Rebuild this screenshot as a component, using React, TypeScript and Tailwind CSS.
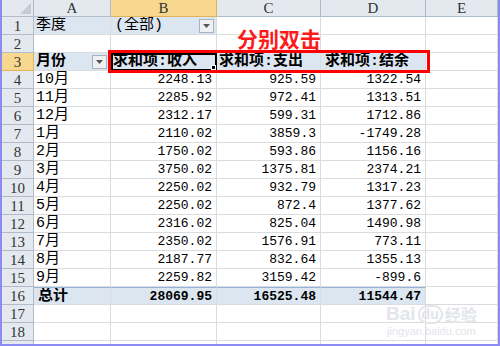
import { useState } from "react";

const rows = [
  { m: "10月", a: "2248.13", b: "925.59", c: "1322.54" },
  { m: "11月", a: "2285.92", b: "972.41", c: "1313.51" },
  { m: "12月", a: "2312.17", b: "599.31", c: "1712.86" },
  { m: "1月", a: "2110.02", b: "3859.3", c: "-1749.28" },
  { m: "2月", a: "1750.02", b: "593.86", c: "1156.16" },
  { m: "3月", a: "3750.02", b: "1375.81", c: "2374.21" },
  { m: "4月", a: "2250.02", b: "932.79", c: "1317.23" },
  { m: "5月", a: "2250.02", b: "872.4", c: "1377.62" },
  { m: "6月", a: "2316.02", b: "825.04", c: "1490.98" },
  { m: "7月", a: "2350.02", b: "1576.91", c: "773.11" },
  { m: "8月", a: "2187.77", b: "832.64", c: "1355.13" },
  { m: "9月", a: "2259.82", b: "3159.42", c: "-899.6" },
];

const cell = "h-[18px] border-r border-b border-[#dadcdd] leading-[18px] overflow-hidden whitespace-nowrap";
const rowHead = "h-[18px] border-r border-b border-[#b1bccb] bg-[#e4e9f0] text-center text-[15px] leading-[18px] text-[#333] font-['Liberation_Serif',serif]";
const colHead = "h-[17px] border-r border-b border-[#b1bccb] bg-[#e4e9f0] text-center text-[15px] leading-[17px] text-[#333] font-['Liberation_Serif',serif]";

const DropBtn = () => (
  <div className="w-[15px] h-[14px] border border-[#a8b2c0] bg-[#eef0f3] flex items-center justify-center">
    <svg width="7" height="4" viewBox="0 0 7 4"><path d="M0 0h7L3.5 4z" fill="#555" /></svg>
  </div>
);

const App = () => {
  const [active] = useState("B3");

  return (
    <div className="relative w-[500px] h-[346px] overflow-hidden bg-white border-x-2 border-b-2 border-[#8a8af2] font-['Liberation_Mono','Noto_Sans_CJK_SC',monospace] text-[13px] text-black">
      <div className="grid grid-cols-[32px_77px_106px_104px_105px_72px]">
        {/* column headers */}
        <div className={`${colHead} flex items-end justify-end pr-[2px] pb-[2px]`}>
          <svg width="11" height="11" viewBox="0 0 11 11"><path d="M11 0v11H0z" fill="#c4cbd4" /></svg>
        </div>
        <div className={colHead}>A</div>
        <div className={`${colHead} bg-[#f8d88f] border-[#e3b35a]`}>B</div>
        <div className={colHead}>C</div>
        <div className={colHead}>D</div>
        <div className={colHead}>E</div>

        {/* row 1 */}
        <div className={rowHead}>1</div>
        <div className={`${cell} bg-[#dce6f1] pl-[2px] text-[15px]`}>季度</div>
        <div className={`${cell} bg-[#dce6f1] pl-[4px] text-[15px] flex items-center justify-between pr-[2px]`}>
          <span>(全部)</span>
          <DropBtn />
        </div>
        <div className={cell}></div>
        <div className={cell}></div>
        <div className={cell}></div>

        {/* row 2 */}
        <div className={rowHead}>2</div>
        <div className={cell}></div>
        <div className={cell}></div>
        <div className={cell}></div>
        <div className={cell}></div>
        <div className={cell}></div>

        {/* row 3 */}
        <div className={`${rowHead} bg-[#f8d88f] border-[#e3b35a]`}>3</div>
        <div className={`${cell} bg-[#dce6f1] pl-[2px] text-[15px] font-bold flex items-center justify-between pr-[3px]`}>
          <span>月份</span>
          <DropBtn />
        </div>
        <div className={`${cell} bg-[#dce6f1] text-[15px] font-bold pl-[2px] relative ${active === "B3" ? "outline-2 outline-black -outline-offset-2" : ""}`}>
          求和项:收入
          <div className="absolute right-0 bottom-0 w-[5px] h-[5px] bg-black border border-white" />
        </div>
        <div className={`${cell} bg-[#dce6f1] text-[15px] font-bold pl-[2px]`}>求和项:支出</div>
        <div className={`${cell} bg-[#dce6f1] text-[15px] font-bold pl-[4px]`}>求和项:结余</div>
        <div className={cell}></div>

        {rows.map((r, i) => (
          <div key={i} className="contents">
            <div className={rowHead}>{i + 4}</div>
            <div className={`${cell} pl-[2px] text-[15px]`}>{r.m}</div>
            <div className={`${cell} text-right pr-[4px]`}>{r.a}</div>
            <div className={`${cell} text-right pr-[4px]`}>{r.b}</div>
            <div className={`${cell} text-right pr-[4px]`}>{r.c}</div>
            <div className={cell}></div>
          </div>
        ))}

        {/* total */}
        <div className={rowHead}>16</div>
        <div className={`${cell} bg-[#dce6f1] border-t border-t-[#95b3d7] pl-[4px] text-[15px] font-bold`}>总计</div>
        <div className={`${cell} bg-[#dce6f1] border-t border-t-[#95b3d7] text-right pr-[4px] font-bold`}>28069.95</div>
        <div className={`${cell} bg-[#dce6f1] border-t border-t-[#95b3d7] text-right pr-[4px] font-bold`}>16525.48</div>
        <div className={`${cell} bg-[#dce6f1] border-t border-t-[#95b3d7] text-right pr-[4px] font-bold`}>11544.47</div>
        <div className={cell}></div>

        {[17, 18, 0].map((n) => (
          <div key={n} className="contents">
            <div className={rowHead}>{n > 0 ? n : ""}</div>
            <div className={cell}></div>
            <div className={cell}></div>
            <div className={cell}></div>
            <div className={cell}></div>
            <div className={cell}></div>
          </div>
        ))}
      </div>

      {/* annotation */}
      <div className="absolute left-[235px] top-[25px] text-[21px] leading-[26px] font-bold text-[#ff1a1a] font-['Noto_Sans_CJK_SC',sans-serif]">
        分别双击
      </div>
      <div className="absolute left-[106px] top-[50px] w-[322px] h-[23px] border-[3px] border-[#ff0000]" />

      {/* watermark */}
      <div className="absolute left-[384px] top-[304px] flex flex-col items-center text-[#e2e5ea] font-['Liberation_Sans',sans-serif]">
        <div className="flex items-center gap-[2px] text-[19px] font-bold leading-[20px]">
          <span>Bai</span>
          <span className="rounded-full border-2 border-[#e2e5ea] px-[2px] text-[14px] leading-[15px]">du</span>
          <span className="font-['Noto_Sans_CJK_SC',sans-serif] text-[16px]">经验</span>
        </div>
        <div className="text-[11px] leading-[14px]">jingyan.baidu.com</div>
      </div>
    </div>
  );
};

export default App;
